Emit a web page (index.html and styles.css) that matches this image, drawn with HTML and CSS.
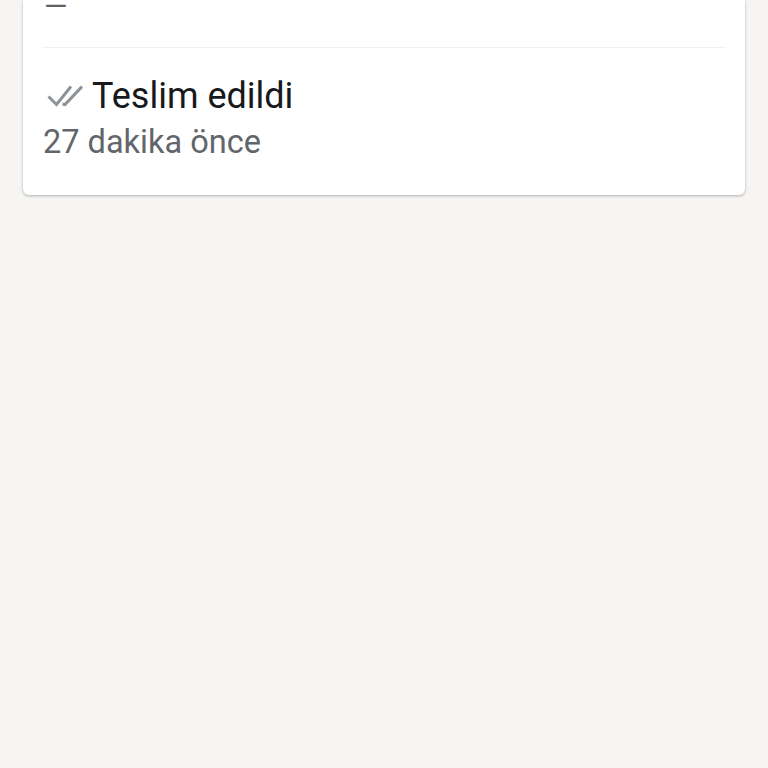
FILE: index.html
```html
<!DOCTYPE html>
<html lang="tr">
<head>
<meta charset="utf-8">
<title>Teslim edildi</title>
<link rel="stylesheet" href="styles.css">
</head>
<body>
<main class="card">
  <div class="top-row"><span class="dash">—</span></div>
  <div class="status">
    <div class="status-line">
      <svg class="ticks" viewBox="0 0 36 24" width="36" height="24" aria-hidden="true">
        <path d="M1.500 12.500 L9.500 20.500 L24 2.500" />
        <path d="M15.500 20 L18 20.500 L35 2.500" />
      </svg>
      <span class="status-title">Teslim edildi</span>
    </div>
    <div class="status-time">27 dakika önce</div>
  </div>
</main>
</body>
</html>
```
FILE: styles.css
```css
* { box-sizing: border-box; }
html, body { height: 100%; }
body {
  margin: 0;
  background: #f6f5f3;
  font-family: Roboto, "Noto Sans", sans-serif;
  overflow: hidden;
}
.card {
  margin: 0 23px;
  height: 195px;
  padding: 0 19px;
  background: #fff;
  border-radius: 0 0 6px 6px;
  box-shadow: 0 1px 3px rgba(0, 0, 0, 0.28);
  display: flex;
  flex-direction: column;
}
.top-row {
  height: 48px;
  flex: none;
  padding-left: 2px;
  border-bottom: 1px solid #f1f1f0;
  overflow: hidden;
}
.dash {
  display: block;
  font-size: 30px;
  line-height: 12px;
  color: #5f6368;
}
.status { padding-top: 26px; }
.status-line {
  display: flex;
  align-items: center;
  height: 44px;
  padding-left: 5px;
  gap: 9px;
}
.ticks { flex: none; fill: none; stroke: #8f9396; stroke-width: 3; }
.status-title { font-size: 36px; color: #17191c; line-height: 44px; }
.status-time { font-size: 32.5px; line-height: 48px; padding-left: 1px; color: #62666b; }
```
